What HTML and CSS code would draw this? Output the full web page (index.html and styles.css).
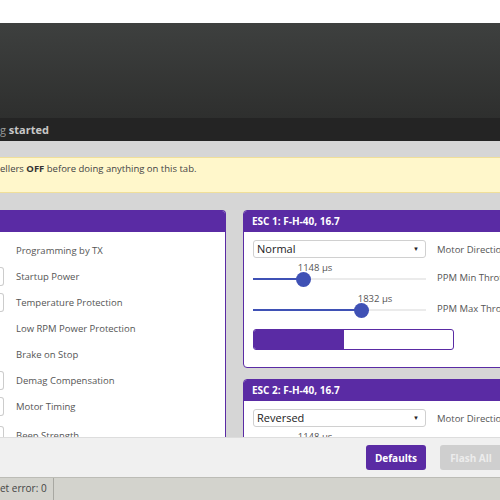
FILE: index.html
```html
<!DOCTYPE html>
<html>
<head>
  <meta charset="utf-8">
  <link rel="stylesheet" href="styles.css">
</head>
<body>
  <div class="topstrip"></div>
  <div class="header"></div>
  <div class="log">g <b>started</b></div>

  <div class="main">
    <div class="note">ellers <b>OFF</b> before doing anything on this tab.</div>

    <div class="columns">
      <div class="panel common">
        <div class="panel_head"></div>
        <div class="panel_body">
          <div class="row"><span class="stub none"></span><span>Programming by TX</span></div>
          <div class="row"><span class="stub"></span><span>Startup Power</span></div>
          <div class="row"><span class="stub"></span><span>Temperature Protection</span></div>
          <div class="row"><span class="stub none"></span><span>Low RPM Power Protection</span></div>
          <div class="row"><span class="stub none"></span><span>Brake on Stop</span></div>
          <div class="row"><span class="stub"></span><span>Demag Compensation</span></div>
          <div class="row"><span class="stub"></span><span>Motor Timing</span></div>
          <div class="row beep"><span class="stub"></span><span>Beep Strength</span></div>
        </div>
      </div>

      <div class="esc_list">
        <div class="panel esc">
          <div class="panel_head">ESC 1: F-H-40, 16.7</div>
          <div class="panel_body">
            <div class="line">
              <div class="select">Normal<span class="caret">&#9660;</span></div>
              <span class="label">Motor Direction</span>
            </div>
            <div class="line slider_line">
              <div class="slider">
                <div class="value" style="left: 62px">1148 &micro;s</div>
                <div class="track"><div class="fill" style="width: 50px"></div></div>
                <div class="thumb" style="left: 43px"></div>
              </div>
              <span class="label">PPM Min Throttle</span>
            </div>
            <div class="line slider_line">
              <div class="slider">
                <div class="value" style="left: 122px">1832 &micro;s</div>
                <div class="track"><div class="fill" style="width: 108px"></div></div>
                <div class="thumb" style="left: 101px"></div>
              </div>
              <span class="label">PPM Max Throttle</span>
            </div>
            <div class="progress"><div class="progress_fill" style="width: 90px"></div></div>
          </div>
        </div>

        <div class="panel esc">
          <div class="panel_head">ESC 2: F-H-40, 16.7</div>
          <div class="panel_body">
            <div class="line">
              <div class="select">Reversed<span class="caret">&#9660;</span></div>
              <span class="label">Motor Direction</span>
            </div>
            <div class="line slider_line">
              <div class="slider">
                <div class="value" style="left: 62px">1148 &micro;s</div>
                <div class="track"><div class="fill" style="width: 50px"></div></div>
                <div class="thumb" style="left: 43px"></div>
              </div>
              <span class="label">PPM Min Throttle</span>
            </div>
          </div>
        </div>
      </div>
    </div>
  </div>

  <div class="footer">
    <button class="btn primary">Defaults</button>
    <button class="btn disabled">Flash All</button>
  </div>

  <div class="status">
    <span class="status_cell">et error: 0</span>
  </div>
</body>
</html>
```

FILE: styles.css
```css
html, body {
  margin: 0;
  width: 500px;
  height: 500px;
  overflow: hidden;
  font-family: "Open Sans", "Liberation Sans", sans-serif;
  background-color: #d6d6d6;
  color: #333;
}

.topstrip {
  height: 23px;
  background-color: #fff;
}
.header {
  height: 95px;
  background: linear-gradient(#3e403f, #2e2f2e);
}
.log {
  height: 23px;
  line-height: 23px;
  background-color: #242424;
  color: #9a9a9a;
  font-size: 11px;
}
.log b {
  color: #c8c8c8;
}

.main {
  height: 296px;
  overflow: hidden;
  padding-top: 16px;
  box-sizing: border-box;
}
.note {
  height: 36px;
  box-sizing: border-box;
  background-color: #fff7cb;
  border-top: 1px solid #f0df9a;
  border-bottom: 1px solid #f0df9a;
  font-size: 9.5px;
  line-height: 22px;
  color: #444;
}
.note b {
  color: #333;
}

.columns {
  display: flex;
  gap: 17px;
  margin-top: 17px;
}

.panel {
  background-color: #fff;
  border: 1px solid #5a2ba4;
  border-radius: 4px;
  overflow: hidden;
}
.panel_head {
  height: 21px;
  line-height: 21px;
  background-color: #5a2ba4;
  color: #fff;
  font-size: 10px;
  font-weight: bold;
  padding-left: 8px;
}

.common {
  width: 226px;
  flex: none;
  border-left: none;
  border-radius: 0 4px 0 0;
  box-sizing: border-box;
}
.common .panel_body {
  padding-top: 5px;
}
.row {
  display: flex;
  align-items: center;
  height: 26px;
  font-size: 9.5px;
  color: #555;
}
.row.beep {
  margin-top: 3px;
}
.stub {
  width: 3px;
  height: 17px;
  margin-right: 12px;
  border: 1px solid #ccc;
  border-left: none;
  border-radius: 0 3px 3px 0;
}
.stub.none {
  border-color: transparent;
}

.esc_list {
  display: flex;
  flex-direction: column;
  gap: 11px;
}
.esc {
  width: 300px;
}
.esc .panel_body {
  padding: 8px 9px 17px 9px;
}
.line {
  display: flex;
  align-items: center;
}
.select {
  width: 173px;
  height: 18px;
  box-sizing: border-box;
  border: 1px solid #d0d0d0;
  border-radius: 3px;
  font-size: 11px;
  line-height: 16px;
  padding-left: 3px;
  color: #222;
  position: relative;
  margin-right: 11px;
}
.caret {
  position: absolute;
  right: 6px;
  top: 0;
  font-size: 6px;
  color: #222;
}
.label {
  font-size: 9.5px;
  color: #555;
  white-space: nowrap;
}

.slider_line {
  height: 31px;
  align-items: flex-end;
}
.slider {
  width: 173px;
  height: 31px;
  margin-right: 11px;
  position: relative;
}
.slider_line .label {
  margin-bottom: 5px;
}
.value {
  position: absolute;
  top: 3px;
  transform: translateX(-50%);
  font-size: 9.5px;
  color: #555;
  white-space: nowrap;
}
.track {
  position: absolute;
  left: 0;
  right: 0;
  bottom: 9px;
  height: 2px;
  background-color: #ebebeb;
}
.fill {
  height: 100%;
  background-color: #3f51b5;
}
.thumb {
  position: absolute;
  bottom: 2px;
  width: 15px;
  height: 15px;
  border-radius: 50%;
  background-color: #3f51b5;
}

.progress {
  margin-top: 9px;
  width: 201px;
  height: 21px;
  box-sizing: border-box;
  border: 1px solid #5a2ba4;
  border-radius: 3px;
  overflow: hidden;
}
.progress_fill {
  height: 100%;
  background-color: #5a2ba4;
}

.footer {
  height: 40px;
  box-sizing: border-box;
  background-color: #f0f0f0;
  border-top: 1px solid #ddd;
  display: flex;
  justify-content: flex-end;
  align-items: center;
  gap: 14px;
  margin-right: -2px;
}
.btn {
  height: 25px;
  border: none;
  border-radius: 3px;
  font-family: "Open Sans", "Liberation Sans", sans-serif;
  font-size: 10px;
  font-weight: bold;
  padding: 0;
}
.primary {
  width: 60px;
  background-color: #5a2ba4;
  color: #fff;
}
.disabled {
  width: 62px;
  background-color: #cfcfcf;
  color: #ececec;
}

.status {
  height: 23px;
  background-color: #d3d3cd;
  border-top: 1px solid #bcbcb6;
  box-sizing: border-box;
  font-size: 10px;
  color: #444;
  display: flex;
  align-items: center;
}
.status_cell {
  width: 53px;
  height: 100%;
  line-height: 21px;
  border-right: 1px solid #a8a8a2;
}
```
